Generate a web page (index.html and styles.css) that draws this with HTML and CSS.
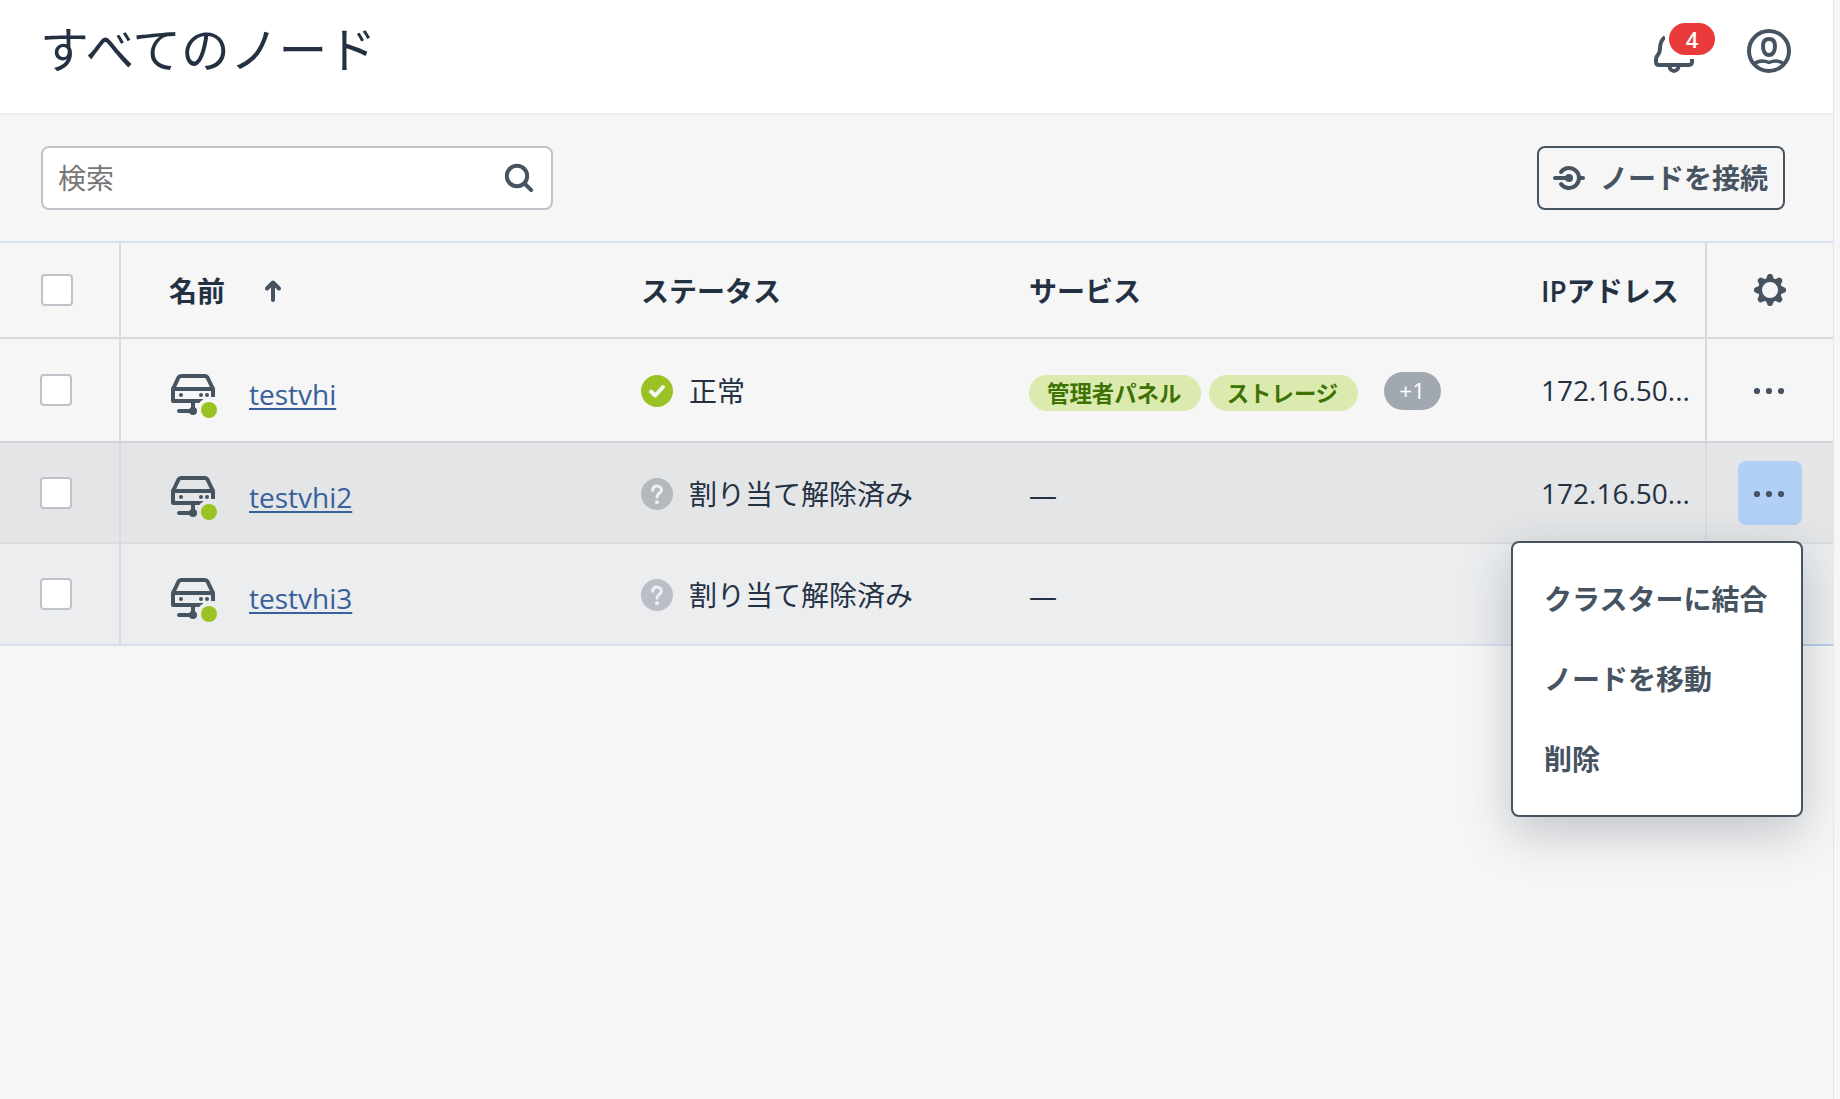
FILE: index.html
```html
<!DOCTYPE html>
<html lang="ja">
<head>
  <meta charset="UTF-8">
  <title>すべてのノード</title>
  <link rel="stylesheet" href="styles.css">
</head>
<body>

<!-- 共通アイコン -->
<svg class="sprite" width="0" height="0">
  <symbol id="node" viewBox="0 0 48 44">
    <g fill="none" stroke="#465360" stroke-width="4" stroke-linejoin="round">
      <path d="M3 16 L8.500 4.500 Q9.300 3 11 3 H35 Q36.700 3 37.500 4.500 L43 16"/>
      <path d="M43 24 V16 H3 V28 H33"/>
      <path d="M23 28 V38 M9 38 H24" stroke-linecap="round"/>
    </g>
    <g fill="#465360">
      <circle cx="11" cy="22" r="2"/><circle cx="31" cy="22" r="2"/><circle cx="37" cy="22" r="2"/>
      <circle cx="23" cy="38" r="4"/>
    </g>
  </symbol>
  <symbol id="dots" viewBox="0 0 32 32">
    <circle cx="4" cy="16" r="3.100"/><circle cx="16" cy="16" r="3.100"/><circle cx="28" cy="16" r="3.100"/>
  </symbol>
  <symbol id="question" viewBox="0 0 32 32">
    <circle cx="16" cy="16" r="16" fill="currentColor"/>
    <path d="M11.600 12.300 C11.800 9.500 13.500 8 16 8 C18.600 8 20.500 9.700 20.500 12 C20.500 15.200 16 15.300 16 19" fill="none" stroke="#eef0f1" stroke-width="3" stroke-linecap="round"/>
    <circle cx="16" cy="24.200" r="2" fill="#eef0f1"/>
  </symbol>
</svg>

<div class="page">
  <header class="header">
    <h1>すべてのノード</h1>
    <div class="header-icons">
      <div class="bell">
        <svg width="44" height="48" viewBox="0 0 44 48" fill="none" stroke="#465360" stroke-width="4">
          <path d="M14 8 C10 11 9 15 9 20 C9 26 5 26 5 30 V33 Q5 36 8 36 H37 Q41 36 41 33 V29"/>
          <path d="M18.500 37 C18.500 43.500 27.500 43.500 27.500 37"/>
        </svg>
        <span class="badge">4</span>
      </div>
      <svg class="user" width="44" height="44" viewBox="0 0 44 44" fill="none" stroke="#465360" stroke-width="4">
        <circle cx="22" cy="22" r="20"/>
        <path d="M22 10 C26.500 10 28 12.500 28 17 C28 22 26 26 22 26 C18 26 16 22 16 17 C16 12.500 17.500 10 22 10 Z"/>
        <path d="M7 35 C12 31 17 31.500 22 33.500 C27 31.500 32 31 37 35" stroke-width="3.400"/>
      </svg>
    </div>
  </header>

  <div class="toolbar">
    <div class="search">
      <input type="text" placeholder="検索">
      <svg width="32" height="32" viewBox="0 0 32 32" fill="none" stroke="#465360" stroke-width="4" stroke-linecap="round">
        <circle cx="14" cy="14" r="10.200"/>
        <path d="M22 22 L28.200 28.200"/>
      </svg>
    </div>
    <button class="connect">
      <svg width="32" height="32" viewBox="0 0 32 32" fill="none" stroke="#465360" stroke-width="4" stroke-linecap="round">
        <path d="M8 10 A10 10 0 1 1 8 22"/>
        <path d="M2 16 H16 M26 16 H30"/>
        <circle cx="16" cy="16" r="4" fill="#465360" stroke="none"/>
      </svg>
      <span>ノードを接続</span>
    </button>
  </div>

  <div class="table">
    <div class="row head">
      <div class="cell check"><span class="checkbox"></span></div>
      <div class="cell name">名前
        <svg class="sort" width="20" height="24" viewBox="0 0 20 24" fill="none" stroke="#465360" stroke-width="4" stroke-linecap="round" stroke-linejoin="round">
          <path d="M10 21 V4 M4 9.500 L10 3.500 L16 9.500"/>
        </svg>
      </div>
      <div class="cell status">ステータス</div>
      <div class="cell services">サービス</div>
      <div class="cell ip"><span class="latin">IP</span>アドレス</div>
      <div class="cell actions">
        <svg class="gear" width="32" height="32" viewBox="-16 -16 32 32">
          <circle r="10" fill="none" stroke="#465360" stroke-width="4"/>
          <g fill="#465360">
            <path id="tooth" d="M-4.200 -10.500 L-2.600 -14.600 Q-2 -16 -0.800 -16 H0.800 Q2 -16 2.600 -14.600 L4.200 -10.500 Z"/>
            <use href="#tooth" transform="rotate(45)"/><use href="#tooth" transform="rotate(90)"/>
            <use href="#tooth" transform="rotate(135)"/><use href="#tooth" transform="rotate(180)"/>
            <use href="#tooth" transform="rotate(225)"/><use href="#tooth" transform="rotate(270)"/>
            <use href="#tooth" transform="rotate(315)"/>
          </g>
        </svg>
      </div>
    </div>

    <div class="row first">
      <div class="cell check"><span class="checkbox"></span></div>
      <div class="cell name">
        <span class="node-icon"><svg width="48" height="44"><use href="#node"/></svg></span>
        <a href="#">testvhi</a>
      </div>
      <div class="cell status">
        <svg width="32" height="32" viewBox="0 0 32 32">
          <circle cx="16" cy="16" r="16" fill="#9bc225"/>
          <path d="M10 16.500 L14.300 20.500 L22 12" fill="none" stroke="#f6f6f6" stroke-width="4" stroke-linecap="round" stroke-linejoin="round"/>
        </svg>
        <span>正常</span>
      </div>
      <div class="cell services">
        <span class="tag">管理者パネル</span>
        <span class="tag">ストレージ</span>
        <span class="more">+1</span>
      </div>
      <div class="cell ip">172.16.50...</div>
      <div class="cell actions"><span class="dots"><svg width="32" height="32"><use href="#dots"/></svg></span></div>
    </div>

    <div class="row active">
      <div class="cell check"><span class="checkbox"></span></div>
      <div class="cell name">
        <span class="node-icon"><svg width="48" height="44"><use href="#node"/></svg></span>
        <a href="#">testvhi2</a>
      </div>
      <div class="cell status">
        <svg width="32" height="32"><use href="#question"/></svg>
        <span>割り当て解除済み</span>
      </div>
      <div class="cell services"><span class="none">—</span></div>
      <div class="cell ip">172.16.50...</div>
      <div class="cell actions">
        <span class="dots open"><svg width="32" height="32"><use href="#dots"/></svg></span>
        <div class="menu">
          <a>クラスターに結合</a>
          <a>ノードを移動</a>
          <a>削除</a>
        </div>
      </div>
    </div>

    <div class="row last">
      <div class="cell check"><span class="checkbox"></span></div>
      <div class="cell name">
        <span class="node-icon"><svg width="48" height="44"><use href="#node"/></svg></span>
        <a href="#">testvhi3</a>
      </div>
      <div class="cell status">
        <svg width="32" height="32"><use href="#question"/></svg>
        <span>割り当て解除済み</span>
      </div>
      <div class="cell services"><span class="none">—</span></div>
      <div class="cell ip"></div>
      <div class="cell actions"></div>
    </div>
  </div>
</div>

</body>
</html>
```

FILE: styles.css
```css
* {
  box-sizing: border-box;
}
body {
  margin: 0;
  background: #f6f6f7;
  color: #243143;
  font-family: "Open Sans", "Noto Sans CJK JP", sans-serif;
  font-size: 28px;
  line-height: 40px;
}
svg {
  display: block;
  flex-shrink: 0;
}
.sprite {
  position: absolute;
}
.page {
  width: 1834px;
  height: 1099px;
  overflow: hidden;
  background: #f6f6f6;
  border-right: 1px solid #e4e5e7;
}

/* ヘッダー */
.header {
  display: flex;
  justify-content: space-between;
  height: 115px;
  padding: 0 42px 0 40px;
  background: #fff;
  border-bottom: 2px solid #ededee;
}
h1 {
  margin: 17px 0 0;
  font-size: 48.8px;
  font-weight: 400;
  line-height: 64px;
}
.header-icons {
  display: flex;
  gap: 52px;
  padding-top: 29px;
}
.bell {
  position: relative;
  width: 44px;
}
.badge {
  position: absolute;
  left: 18px;
  top: -6px;
  width: 46px;
  height: 32px;
  border-radius: 16px;
  background: #ea3b3c;
  box-shadow: 0 0 0 4px #fff;
  color: #fff;
  font-size: 22px;
  font-weight: 600;
  line-height: 33px;
  text-align: center;
}

/* 検索とボタン */
.toolbar {
  display: flex;
  justify-content: space-between;
  height: 126px;
  padding: 31px 48px 31px 41px;
}
.search {
  display: flex;
  align-items: center;
  width: 512px;
  height: 64px;
  padding: 0 16px 0 15px;
  background: #fff;
  border: 2px solid #bfc3ca;
  border-radius: 8px;
}
.search input {
  flex: 1;
  padding: 0;
  border: 0;
  outline: 0;
  font: inherit;
}
.search input::placeholder {
  color: #767676;
}
.connect {
  display: flex;
  align-items: center;
  gap: 15px;
  width: 248px;
  height: 64px;
  padding: 0 14px;
  background: none;
  border: 2px solid #465360;
  border-radius: 8px;
  color: #465360;
  font: inherit;
  font-weight: 700;
  white-space: nowrap;
}

/* テーブル */
.table {
  border-top: 2px solid #d6e0ef;
}
.row {
  display: grid;
  grid-template-columns: 121px 490px 388px 512px 194px 1fr;
  height: 102px;
  border-bottom: 2px solid #d9dadf;
}
.cell {
  display: flex;
  align-items: center;
  padding-left: 30px;
  white-space: nowrap;
}
.head {
  height: 96px;
  font-weight: 700;
}
.head .cell {
  padding-top: 2px;
}
.head .latin {
  font-weight: 600;
}
.first {
  height: 104px;
  border-color: #d0d3d8;
}
.active {
  height: 101px;
  background: #e3e5e7;
  border-color: #dadcde;
}
.last {
  background: #ebedef;
  border-color: #d6e0ef;
}
.check {
  padding-left: 40px;
  border-right: 2px solid #d9dadf;
}
.head .check {
  padding: 0 0 0 41px;
}
.checkbox {
  width: 32px;
  height: 32px;
  background: #fff;
  border: 2px solid #bfc2c9;
  border-radius: 4px;
}
.name {
  padding-left: 48px;
}
.sort {
  margin-left: 38px;
}
.node-icon {
  position: relative;
  margin: 9px 31px 0 1px;
}
.node-icon::after {
  content: "";
  position: absolute;
  left: 31px;
  top: 29px;
  width: 16px;
  height: 16px;
  border-radius: 50%;
  background: #9bc225;
  box-shadow: 0 0 0 4px #f6f6f6;
}
.active .node-icon::after {
  box-shadow: 0 0 0 4px #e3e5e7;
}
.last .node-icon::after {
  box-shadow: 0 0 0 4px #ebedef;
}
.name a {
  margin-top: 8px;
  color: #38609a;
  text-decoration: underline;
  text-decoration-thickness: 2px;
  text-underline-offset: 3px;
}
.status {
  gap: 16px;
  padding-top: 2px;
}
.status svg {
  color: #b4b9be;
}
.last .status svg {
  color: #bbbec7;
}
.tag {
  height: 36px;
  margin: 6px 8px 0 0;
  padding: 0 19.4px 0 18px;
  border-radius: 18px;
  background: #dbeaaf;
  color: #3f7204;
  font-size: 22.4px;
  font-weight: 700;
  line-height: 37px;
}
.more {
  width: 57px;
  height: 38px;
  margin: 2px 0 0 18px;
  border-radius: 19px;
  background: #a2a8b0;
  color: #fff;
  font-size: 22.4px;
  line-height: 38px;
  text-align: center;
}
.none {
  margin-top: 2px;
}
.actions {
  position: relative;
  justify-content: center;
  padding: 0;
  border-left: 2px solid #d9dadf;
}
.head .actions {
  padding: 0;
}
.last .actions {
  /* 固定列は下線の色が濃い */
  margin-bottom: -2px;
  border-bottom: 2px solid #b9cfec;
}
.active .actions,
.last .actions {
  border-left-color: #dadce0;
}
.dots {
  display: flex;
  align-items: center;
  justify-content: center;
  width: 64px;
  height: 64px;
  border-radius: 8px;
  fill: #465360;
}
.dots svg {
  margin: 2px 2px 0 0;
}
.open {
  background: #b2cff6;
}

/* 操作メニュー */
.menu {
  position: absolute;
  z-index: 2;
  right: 30px;
  top: 98px;
  width: 292px;
  height: 276px;
  padding: 16px 31px;
  background: #fff;
  border: 2px solid #465360;
  border-radius: 8px;
  box-shadow: 0 16px 48px rgba(36, 49, 67, 0.25);
}
.menu a {
  display: block;
  color: #465360;
  font-weight: 700;
  line-height: 80px;
}
```
